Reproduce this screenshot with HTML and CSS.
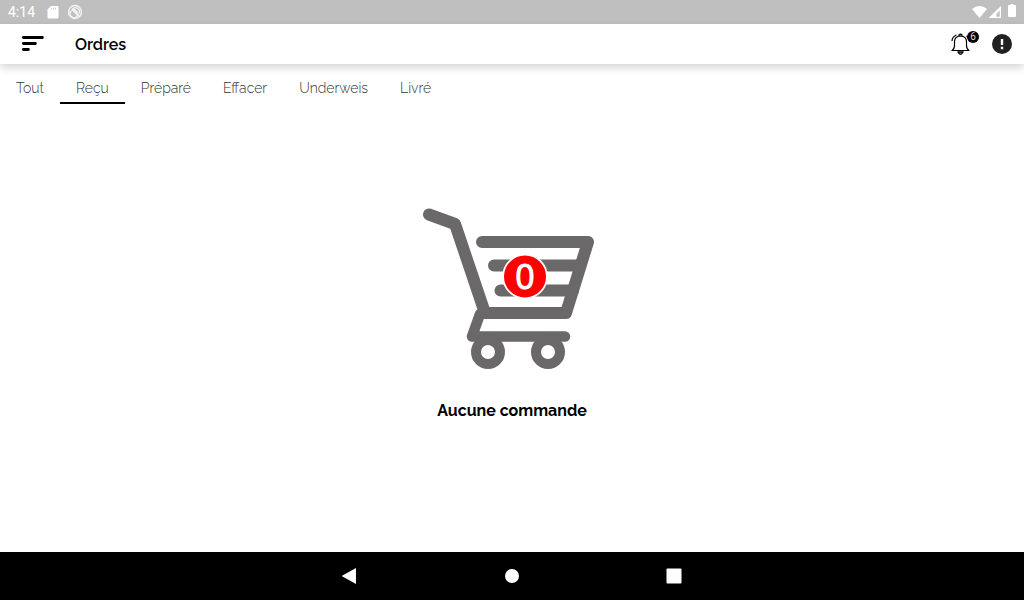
FILE: index.html
```html
<!DOCTYPE html>
<html lang="fr">
<head>
<meta charset="utf-8">
<meta name="viewport" content="width=device-width, initial-scale=1">
<title>Ordres</title>
<link rel="stylesheet" href="styles.css">
</head>
<body>
<div class="status-bar">
  <span class="clock">4:14</span>
  <svg class="status-icon" width="12" height="14" viewBox="0 0 12 14" aria-hidden="true"><path d="M4 1h6.500q1 0 1 1v10.500q0 1-1 1H1.500q-1 0-1-1V4.500z" fill="#fff"/><path d="M4.500 2.500v2M6.500 2.500v2M8.500 2.500v2" stroke="#d8d8d8" stroke-width="1"/></svg>
  <svg class="status-icon" width="16" height="16" viewBox="0 0 16 16" fill="none" stroke="#f4f4f4" aria-hidden="true"><circle cx="8" cy="8" r="6.500" stroke-width="1.400"/><path d="M4.500 6.500a4 4 0 1 0 6 5M5.500 5a4 4 0 0 1 6.500 4.500" stroke-width="1.400"/><path d="M5 5l7 7M7 5.500l3.500 3.500" stroke-width="2"/></svg>
  <svg class="signals" width="46" height="16" viewBox="0 0 46 16" fill="#fff" aria-hidden="true"><path d="M0 5Q7.500-1 15 5L7.500 14z"/><path d="M29 2v12H16.500zM27.700 6.500L24.500 9.800v3h3.200z" fill-rule="evenodd"/><path d="M38.500 0h3v1H43q1 0 1 1v10q0 1-1 1h-6q-1 0-1-1V2q0-1 1-1h1.500z"/></svg>
</div>
<header class="app-bar">
  <button class="icon-button menu" aria-label="Menu"><svg width="24" height="18" viewBox="0 0 24 18" fill="none" stroke="#000" stroke-width="2.800" stroke-linecap="round"><path d="M2.400 2.500h19M2.400 8.500h12M2.400 14.500h5"/></svg></button>
  <h1 class="title">Ordres</h1>
  <button class="icon-button bell" aria-label="Notifications : 6">
    <svg width="22" height="24" viewBox="0 0 22 24" fill="none" stroke="#000" stroke-width="1.200" stroke-linejoin="round"><path d="M2 18.500h17q-2.500-1.500-2.500-5V9.500q0-5-6-5.500-6 .5-6 5.500v4q0 3.500-2.500 5z"/><path d="M9 4V3q1.500-1.500 3 0v1M2 9q0-4 4.500-6M19 9q0-3-2.500-5"/><path d="M8 20q2.500 4.500 5 0z" fill="#fff" stroke-width="1.500"/></svg>
    <span class="count">6</span>
  </button>
  <button class="icon-button alert" aria-label="Alerte"><svg width="20" height="20" viewBox="0 0 20 20"><circle cx="10" cy="10" r="10" fill="#212121"/><path d="M8.800 5h2.400v6H8.800zM8.800 12.800h2.400v2.400H8.800z" fill="#fff"/></svg></button>
</header>
<nav class="tabs" aria-label="Ordres">
  <a class="tab" href="#tout">Tout</a>
  <a class="tab active" href="#recu" aria-current="page">Reçu</a>
  <a class="tab" href="#prepare">Préparé</a>
  <a class="tab" href="#effacer">Effacer</a>
  <a class="tab" href="#underweis">Underweis</a>
  <a class="tab" href="#livre">Livré</a>
</nav>
<main class="empty">
  <svg class="cart" width="200" height="185" viewBox="2 0 200 185" role="img" aria-label="Panier : 0">
    <g fill="none" stroke="#6b6869" stroke-linecap="round" stroke-linejoin="round">
      <path d="M19 19.500L45 29L75 118H156L178 47H72" stroke-width="12"/>
      <path d="M84 70.500H170M90.500 95.500H163" stroke-width="12"/>
      <path d="M70 119L62 141.500H155" stroke-width="10.500"/>
      <circle cx="78" cy="157" r="12" stroke-width="10" fill="#fff"/>
      <circle cx="138" cy="157" r="12" stroke-width="10" fill="#fff"/>
    </g>
    <circle cx="115" cy="81.500" r="21.900" fill="#f00" stroke="#fff" stroke-width="1.800"/>
    <text class="cart-count" x="115" y="94">0</text>
  </svg>
  <p class="message">Aucune commande</p>
</main>
<footer class="nav-bar">
  <button class="nav-button" aria-label="Retour"><svg width="16" height="16" viewBox="0 0 16 16"><path d="M14 0v16L.5 8.600q-.8-.6 0-1.200z" fill="#fff"/></svg></button>
  <button class="nav-button" aria-label="Accueil"><svg width="16" height="16" viewBox="0 0 16 16"><circle cx="8" cy="8" r="7" fill="#fff"/></svg></button>
  <button class="nav-button" aria-label="Applications récentes"><svg width="16" height="16" viewBox="0 0 16 16"><rect x=".5" y=".5" width="15" height="15" rx="1" fill="#fff"/></svg></button>
</footer>
</body>
</html>
```

FILE: styles.css
```css
* { box-sizing: border-box; }
body {
  margin: 0;
  min-height: 100vh;
  display: flex;
  flex-direction: column;
  background: #fff;
  color: #000;
  font-family: Raleway, Lato, sans-serif;
}
svg { display: block; }
button { padding: 0; border: 0; background: none; }
.status-bar {
  height: 24px;
  display: flex;
  align-items: center;
  padding: 0 6px 0 8px;
  background: #bfbfbf;
  color: #fff;
}
.clock {
  width: 39px;
  font: 14px/24px Roboto, sans-serif;
}
.status-icon { margin-right: 8px; }
.signals { margin-left: auto; }
.app-bar {
  height: 40px;
  display: flex;
  align-items: center;
  padding: 0 12px 0 21px;
  background: #fff;
  box-shadow: 0 4px 8px rgba(0, 0, 0, 0.16);
}
.title {
  margin: 0 auto 0 30px;
  padding-top: 1px;
  font-size: 16px;
  line-height: 24px;
  font-weight: 600;
}
.bell { position: relative; margin-right: 20px; }
.count {
  position: absolute;
  top: -1px;
  right: -7px;
  width: 12px;
  height: 12px;
  border-radius: 50%;
  background: #000;
  color: #ddd;
  font: 10px/12px Roboto, sans-serif;
  text-align: center;
}
.tabs { display: flex; height: 40px; }
.tab {
  padding: 12px 16px 0;
  border-bottom: 2px solid transparent;
  color: #333;
  font-size: 14px;
  line-height: 24px;
  font-weight: 300;
  text-decoration: none;
}
.active { border-color: #000; }
.empty {
  flex: 1;
  display: flex;
  flex-direction: column;
  align-items: center;
  justify-content: center;
  padding-bottom: 39px;
}
.cart-count {
  fill: #fff;
  stroke: #fff;
  stroke-width: 1px;
  font-family: "Open Sans", sans-serif;
  font-size: 34px;
  text-anchor: middle;
}
.message {
  margin: 19px 0 0;
  font-size: 16px;
  line-height: 24px;
  font-weight: 700;
}
.nav-bar {
  height: 48px;
  display: flex;
  align-items: center;
  justify-content: center;
  gap: 146px;
  background: #000;
}
```
